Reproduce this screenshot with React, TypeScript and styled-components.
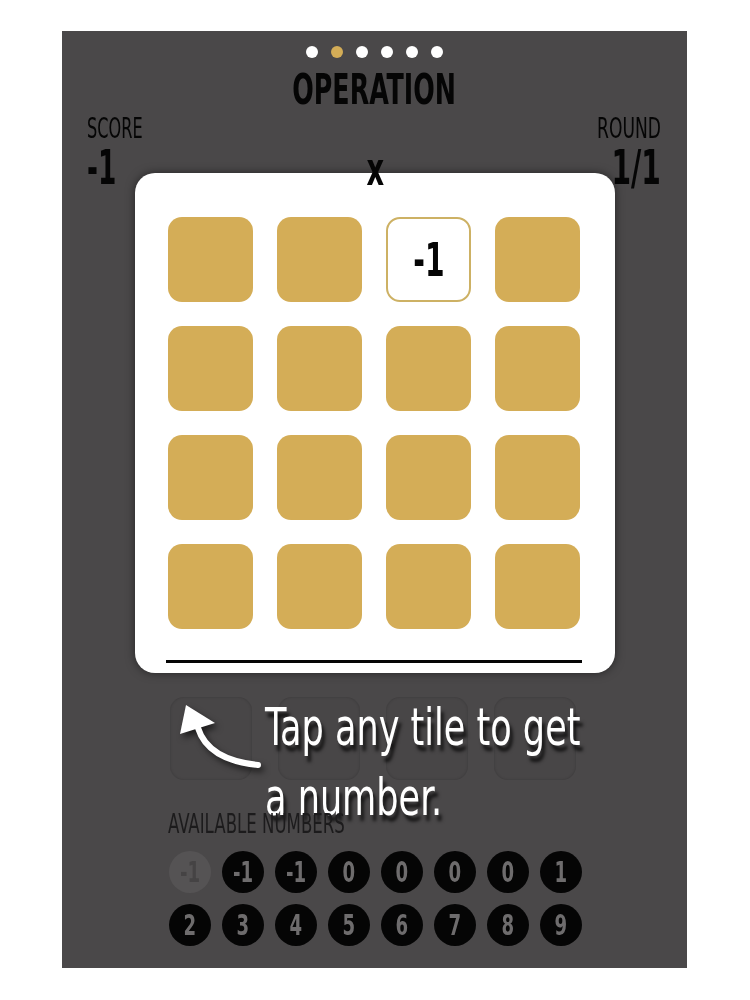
import React from 'react';
import styled, { createGlobalStyle, css } from 'styled-components';

const condensed = '"DejaVu Sans Condensed", "DejaVu Sans", sans-serif';

const GlobalStyle = createGlobalStyle`
    html, body {
        margin: 0;
        padding: 0;
        background: #ffffff;
    }
    body {
        font-family: ${condensed};
        font-stretch: condensed;
    }
`;

// the app uses a very narrow face; squeeze the condensed one to match its width
const squeeze = (amount: number, origin = 'left center') => css`
    display: inline-block;
    transform: scaleX(${amount});
    transform-origin: ${origin};
`;

const pageCount = 6;
const activePage = 1;
const tiles = Array.from({ length: 16 }, (_, i) => (i === 2 ? '-1' : null));
const numbers = ['-1', '-1', '-1', '0', '0', '0', '0', '1', '2', '3', '4', '5', '6', '7', '8', '9'];

const App: React.FC = () => {
    return (
        <Page>
            <GlobalStyle />
            <Screen>
                <Dots>
                    {Array.from({ length: pageCount }, (_, i) => (
                        <Dot key={i} active={i === activePage} />
                    ))}
                </Dots>
                <Title>
                    <TitleText>OPERATION</TitleText>
                </Title>
                <ScoreRow>
                    <Stat>
                        <StatLabel>SCORE</StatLabel>
                        <StatValue>-1</StatValue>
                    </Stat>
                    <Operator>x</Operator>
                    <Stat align="right">
                        <StatLabel align="right">ROUND</StatLabel>
                        <StatValue align="right">1/1</StatValue>
                    </Stat>
                </ScoreRow>
                <Card>
                    <Grid>
                        {tiles.map((value, i) => (
                            <Tile key={i} revealed={value !== null}>
                                {value && <TileText>{value}</TileText>}
                            </Tile>
                        ))}
                    </Grid>
                    <Divider />
                </Card>
                <HintArea>
                    <GhostRow>
                        {[0, 1, 2, 3].map(i => (
                            <GhostTile key={i} />
                        ))}
                    </GhostRow>
                    <Hint>
                        <Arrow viewBox="0 0 90 72" width="90" height="72">
                            <polygon points="12,3 41,21 6,32" fill="#ffffff" />
                            <path
                                d="M24 26 Q 34 58 84 63"
                                fill="none"
                                stroke="#ffffff"
                                strokeWidth="6"
                                strokeLinecap="round"
                            />
                        </Arrow>
                        <HintText>
                            Tap any tile to get
                            <br />
                            a number.
                        </HintText>
                    </Hint>
                </HintArea>
                <AvailableLabel>
                    <LabelText>AVAILABLE NUMBERS</LabelText>
                </AvailableLabel>
                <NumberGrid>
                    {numbers.map((n, i) => (
                        <NumberChip key={i} used={i === 0}>
                            <ChipText>{n}</ChipText>
                        </NumberChip>
                    ))}
                </NumberGrid>
            </Screen>
        </Page>
    );
};

const Page = styled.div`
    padding: 31px 0 32px 62px;
`;

const Screen = styled.div`
    width: 625px;
    height: 937px;
    box-sizing: border-box;
    background: #4a4849;
    display: flex;
    flex-direction: column;
    padding: 15px 26px 0 25px;
    position: relative;
`;

const Dots = styled.div`
    display: flex;
    justify-content: center;
    gap: 13px;
    margin-left: 1px;
`;

const Dot = styled.div<{ active: boolean }>`
    width: 12px;
    height: 12px;
    border-radius: 50%;
    background: ${props => (props.active ? '#d4ad57' : '#ffffff')};
`;

const Title = styled.div`
    text-align: center;
    font-size: 42px;
    font-weight: 700;
    line-height: 44px;
    color: #050505;
    margin-top: 10px;
`;

const TitleText = styled.span`
    ${squeeze(0.67, 'center center')}
`;

const ScoreRow = styled.div`
    display: flex;
    justify-content: space-between;
    align-items: flex-end;
    margin-top: 2px;
`;

const Stat = styled.div<{ align?: 'left' | 'right' }>`
    display: flex;
    flex-direction: column;
    align-items: ${props => (props.align === 'right' ? 'flex-end' : 'flex-start')};
    color: #050505;
`;

const StatLabel = styled.div<{ align?: 'left' | 'right' }>`
    font-size: 28px;
    font-weight: 400;
    line-height: 30px;
    ${props => squeeze(props.align === 'right' ? 0.68 : 0.64, props.align === 'right' ? 'right center' : 'left center')}
`;

const StatValue = styled.div<{ align?: 'left' | 'right' }>`
    font-size: 48px;
    font-weight: 700;
    line-height: 46px;
    ${props => squeeze(props.align === 'right' ? 0.65 : 0.61, props.align === 'right' ? 'right center' : 'left center')}
`;

const Operator = styled.div`
    font-size: 46px;
    font-weight: 700;
    line-height: 40px;
    color: #050505;
    margin: 0 0 1px 10px;
    position: relative;
    z-index: 2;
    ${squeeze(0.66, 'center center')}
`;

const Card = styled.div`
    width: 480px;
    height: 500px;
    box-sizing: border-box;
    margin: -17px 0 0 48px;
    background: #ffffff;
    border-radius: 20px;
    box-shadow: 0 0 10px rgba(0, 0, 0, 0.5);
    padding: 44px 33px 0 33px;
    display: flex;
    flex-direction: column;
    position: relative;
    z-index: 1;
`;

const Grid = styled.div`
    display: grid;
    grid-template-columns: repeat(4, 85px);
    grid-auto-rows: 85px;
    column-gap: 24px;
    row-gap: 24px;
`;

const Tile = styled.div<{ revealed: boolean }>`
    box-sizing: border-box;
    border-radius: 14px;
    background: ${props => (props.revealed ? '#ffffff' : '#d4ad57')};
    border: ${props => (props.revealed ? '2px solid #cdb164' : 'none')};
    display: flex;
    align-items: center;
    justify-content: center;
    font-size: 46px;
    font-weight: 700;
    color: #050505;
`;

const TileText = styled.span`
    ${squeeze(0.68, 'center center')}
`;

const Divider = styled.div`
    height: 3px;
    background: #050505;
    margin: 31px 0 0 -2px;
    width: 416px;
`;

const HintArea = styled.div`
    position: relative;
    margin: 24px 0 0 83px;
`;

const GhostRow = styled.div`
    display: flex;
    gap: 26px;
`;

const GhostTile = styled.div`
    width: 82px;
    height: 83px;
    border-radius: 14px;
    background: #484647;
    box-shadow: inset 0 0 3px rgba(0, 0, 0, 0.2);
`;

const Hint = styled.div`
    position: absolute;
    top: 0;
    left: 0;
    display: flex;
    align-items: flex-start;
`;

const Arrow = styled.svg`
    flex-shrink: 0;
    margin: 5px 0 0 4px;
    filter: drop-shadow(3px 4px 3px rgba(0, 0, 0, 0.6));
`;

const HintText = styled.div`
    font-size: 52px;
    line-height: 70px;
    color: #ffffff;
    text-shadow: 4px 6px 4px rgba(0, 0, 0, 0.75);
    margin-left: 1px;
    margin-top: -5px;
    white-space: nowrap;
    ${squeeze(0.75, 'left top')}
`;

const AvailableLabel = styled.div`
    font-size: 26px;
    line-height: 28px;
    color: #1c1b1c;
    margin: 30px 0 0 81px;
`;

const LabelText = styled.span`
    ${squeeze(0.71)}
`;

const NumberGrid = styled.div`
    display: grid;
    grid-template-columns: repeat(8, 42px);
    grid-auto-rows: 42px;
    column-gap: 11px;
    row-gap: 11px;
    margin: 13px 0 0 82px;
`;

const NumberChip = styled.div<{ used: boolean }>`
    border-radius: 50%;
    background: ${props => (props.used ? '#555354' : '#050505')};
    color: ${props => (props.used ? '#454344' : '#6e6c6d')};
    display: flex;
    align-items: center;
    justify-content: center;
    font-size: 28px;
    font-weight: 700;
`;

const ChipText = styled.span`
    ${squeeze(0.72, 'center center')}
`;

export default App;
